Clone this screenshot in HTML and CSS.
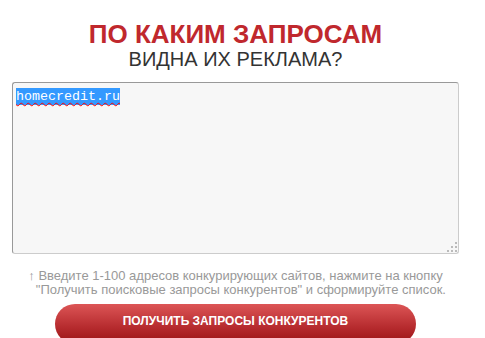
FILE: index.html
```html
<!DOCTYPE html>
<html lang="ru">
<head>
<meta charset="UTF-8">
<meta name="viewport" content="width=device-width, initial-scale=1.0">
<link rel="stylesheet" href="styles.css">
</head>
<body>
  <div class="page">
    <!-- Heading -->
    <h1 class="title">ПО КАКИМ ЗАПРОСАМ
      <div class="subtitle">ВИДНА ИХ РЕКЛАМА?</div>
    </h1>

    <!-- Fake textarea with selected text -->
    <div class="query-box">
      <span class="query-text">homecredit.ru</span>
      <svg class="grip" width="13" height="13" viewBox="0 0 13 13">
        <rect x="10" y="2" width="2" height="2" fill="#bbb"/>
        <rect x="6" y="6" width="2" height="2" fill="#bbb"/>
        <rect x="10" y="6" width="2" height="2" fill="#bbb"/>
        <rect x="2" y="10" width="2" height="2" fill="#bbb"/>
        <rect x="6" y="10" width="2" height="2" fill="#bbb"/>
        <rect x="10" y="10" width="2" height="2" fill="#bbb"/>
      </svg>
    </div>

    <p class="hint">&uarr; Введите 1-100 адресов конкурирующих сайтов, нажмите на кнопку<br>&nbsp; &nbsp;"Получить поисковые запросы конкурентов" и сформируйте список.</p>

    <button class="get-btn">ПОЛУЧИТЬ ЗАПРОСЫ КОНКУРЕНТОВ</button>
  </div>
</body>
</html>
```

FILE: styles.css
```css
body {
  margin: 0;
  background: #ffffff;
  font-family: "Liberation Sans", Arial, sans-serif;
  overflow: hidden;
}

.page {
  width: 447px;
  margin: 0 12px;
  padding-top: 21px;
  display: flex;
  flex-direction: column;
  align-items: center;
}

.title {
  margin: 0;
  font-size: 26px;
  line-height: 26px;
  font-weight: bold;
  color: #c0282d;
  text-align: center;
}

.subtitle {
  font-size: 20px;
  line-height: 22px;
  font-weight: normal;
  color: #333333;
  margin-top: 1px;
}

/* looks like a textarea */
.query-box {
  box-sizing: border-box;
  position: relative;
  width: 447px;
  height: 172px;
  margin-top: 12px;
  padding: 3px 3px;
  background: #f7f7f7;
  border: 1px solid #cccccc;
  border-top-color: #999999;
  border-left-color: #999999;
  border-radius: 3px;
  text-align: left;
}

.query-text {
  font-family: "Liberation Mono", "Courier New", monospace;
  font-size: 13.33px;
  line-height: 17px;
  display: inline-block;
  background: #3399ff;
  color: #ffffff;
  text-decoration: underline wavy #ff0000;
  text-decoration-thickness: 1px;
  text-underline-offset: 2px;
}

.grip {
  position: absolute;
  right: 0;
  bottom: 0;
}

.hint {
  margin: 15px 0 0 0;
  font-size: 13px;
  line-height: 14px;
  color: #999999;
  text-align: center;
}

.get-btn {
  margin-top: 7px;
  width: 361px;
  height: 40px;
  border: none;
  border-radius: 20px;
  background: linear-gradient(to bottom, #dc5556, #b52a2d 60%, #9a1214);
  color: #ffffff;
  font-family: "Liberation Sans", Arial, sans-serif;
  font-size: 12px;
  font-weight: bold;
  padding: 0 0 6px 0;
}
```
